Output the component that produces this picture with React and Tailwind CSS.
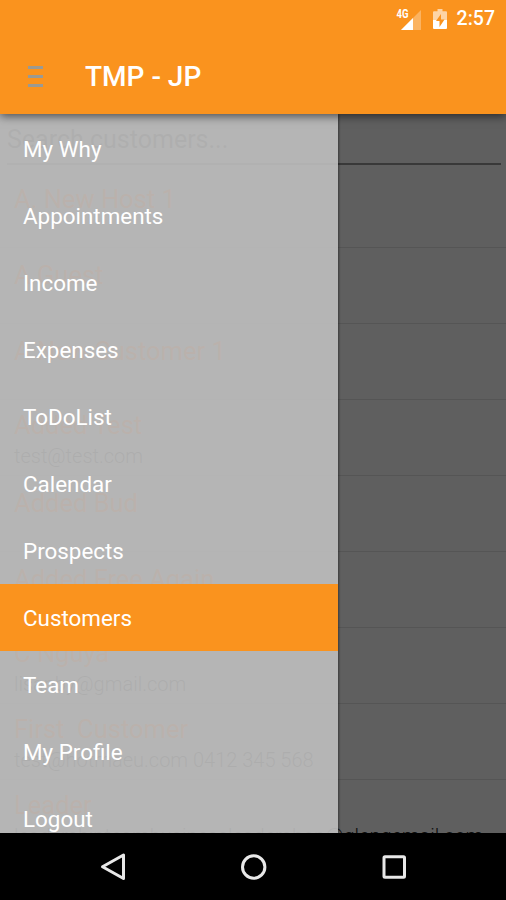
const MENU = [
  'My Why', 'Appointments', 'Income', 'Expenses', 'ToDoList', 'Calendar',
  'Prospects', 'Customers', 'Team', 'My Profile', 'Logout',
];

const CUSTOMERS = [
  { name: 'A. New Host 1' },
  { name: 'A Guest' },
  { name: 'A New Customer 1' },
  { name: 'Added Test', contact: 'test@test.com' },
  { name: 'Added Bud' },
  { name: 'Added Free Again' },
  { name: 'C Nguya', contact: 'lisanby@gmail.com' },
  { name: 'First  Customer', contact: 'test@hotmaeu.com 0412 345 568' },
  { name: 'Leader', contact: 'leadershipteambusinessleadershop@glengemail.com' },
];

function StatusBar() {
  return (
    <div className="flex h-[38px] items-center justify-end pr-[11px] text-white">
      <svg width="28" height="24" viewBox="0 0 28 24" className="mr-[10px]">
        <path d="M26 3v20H6z" fill="#fff" opacity="0.3" />
        <path d="M18 11v12H6z" fill="#fff" />
        <path d="M0 1h15v10l-4 4H0z" fill="#fa931e" />
        <text x="1.500" y="11" fontSize="12" fontWeight="700" textLength="12" lengthAdjust="spacingAndGlyphs" fill="#fff" fontFamily="Roboto, sans-serif">4G</text>
      </svg>
      <svg width="14" height="20" viewBox="0 0 14 20" className="mr-[10px]">
        <path d="M4.5 0h5v2.200H13a1 1 0 0 1 1 1V11H0V3.200a1 1 0 0 1 1-1h3.500z" fill="#fff" opacity="0.6" />
        <path d="M0 11h14v8a1 1 0 0 1-1 1H1a1 1 0 0 1-1-1z" fill="#fff" />
        <path d="M8 5l-5 7h3.500v6l5-7.500H8z" fill="#fa931e" />
      </svg>
      <span className="text-[19.500px] leading-none font-medium">2:57</span>
    </div>
  );
}

function Header() {
  return (
    <header className="relative z-20 h-[114px] shrink-0 bg-[#fa931e] shadow-[0_2px_9px_rgba(0,0,0,0.6)]">
      <StatusBar />
      <div className="flex h-[76px] items-center pt-px pl-7">
        <div className="flex w-[15px] flex-col gap-[6px]">
          <span className="h-[3px] bg-[#9b9a93]" />
          <span className="h-[3px] bg-[#9b9a93]" />
          <span className="h-[3px] bg-[#9b9a93]" />
        </div>
        <h1 className="ml-[42px] text-[28px] leading-none font-medium text-white">TMP - JP</h1>
      </div>
    </header>
  );
}

function CustomerList() {
  return (
    <div>
      <div className="mr-[5px] ml-[7px] h-[51px] border-b-2 border-[#393939] text-[25px] leading-[51px] text-[#181818]">
        Search customers...
      </div>
      <ul className="mt-[7px]">
        {CUSTOMERS.map((c) => (
          <li key={c.name} className="h-[76px] border-b border-[#555555] pl-[14px]">
            <div className={`text-[25.500px] leading-[30px] whitespace-pre text-[#8f3a00] ${c.contact ? 'pt-[10px]' : 'pt-[12px]'}`}>{c.name}</div>
            {c.contact && <div className="text-[20px] leading-[32px] font-light whitespace-nowrap text-[#0c0c0c]">{c.contact}</div>}
          </li>
        ))}
      </ul>
    </div>
  );
}

function Drawer({ active }) {
  return (
    <nav className="absolute inset-y-0 left-0 w-[338px] overflow-hidden bg-[#bfbfbf]/90 pt-px shadow-[1px_0_2px_rgba(0,0,0,0.4)]">
      {MENU.map((item) => (
        <div
          key={item}
          className={`flex h-[67px] items-center pt-[2px] pl-[23px] text-[22.400px] text-white ${item === active ? 'bg-[#fa931e]' : ''}`}
        >
          {item}
        </div>
      ))}
    </nav>
  );
}

function NavBar() {
  return (
    <footer className="relative z-20 h-[67px] shrink-0 bg-black">
      <svg width="506" height="67" viewBox="0 0 506 67" fill="none" stroke="#e8e8e8" strokeWidth="3" strokeLinejoin="round">
        <path d="M123.500 22v23.500L102.500 33.800z" />
        <circle cx="253.700" cy="34" r="11.200" />
        <rect x="384" y="23.800" width="20.500" height="20.500" rx="1" />
      </svg>
    </footer>
  );
}

export default function App() {
  return (
    <div className="flex h-[900px] w-[506px] flex-col overflow-hidden font-['Roboto',sans-serif]">
      <Header />
      <main className="relative min-h-0 flex-1 overflow-hidden bg-[#5f5f5f]">
        <CustomerList />
        <Drawer active="Customers" />
      </main>
      <NavBar />
    </div>
  );
}
